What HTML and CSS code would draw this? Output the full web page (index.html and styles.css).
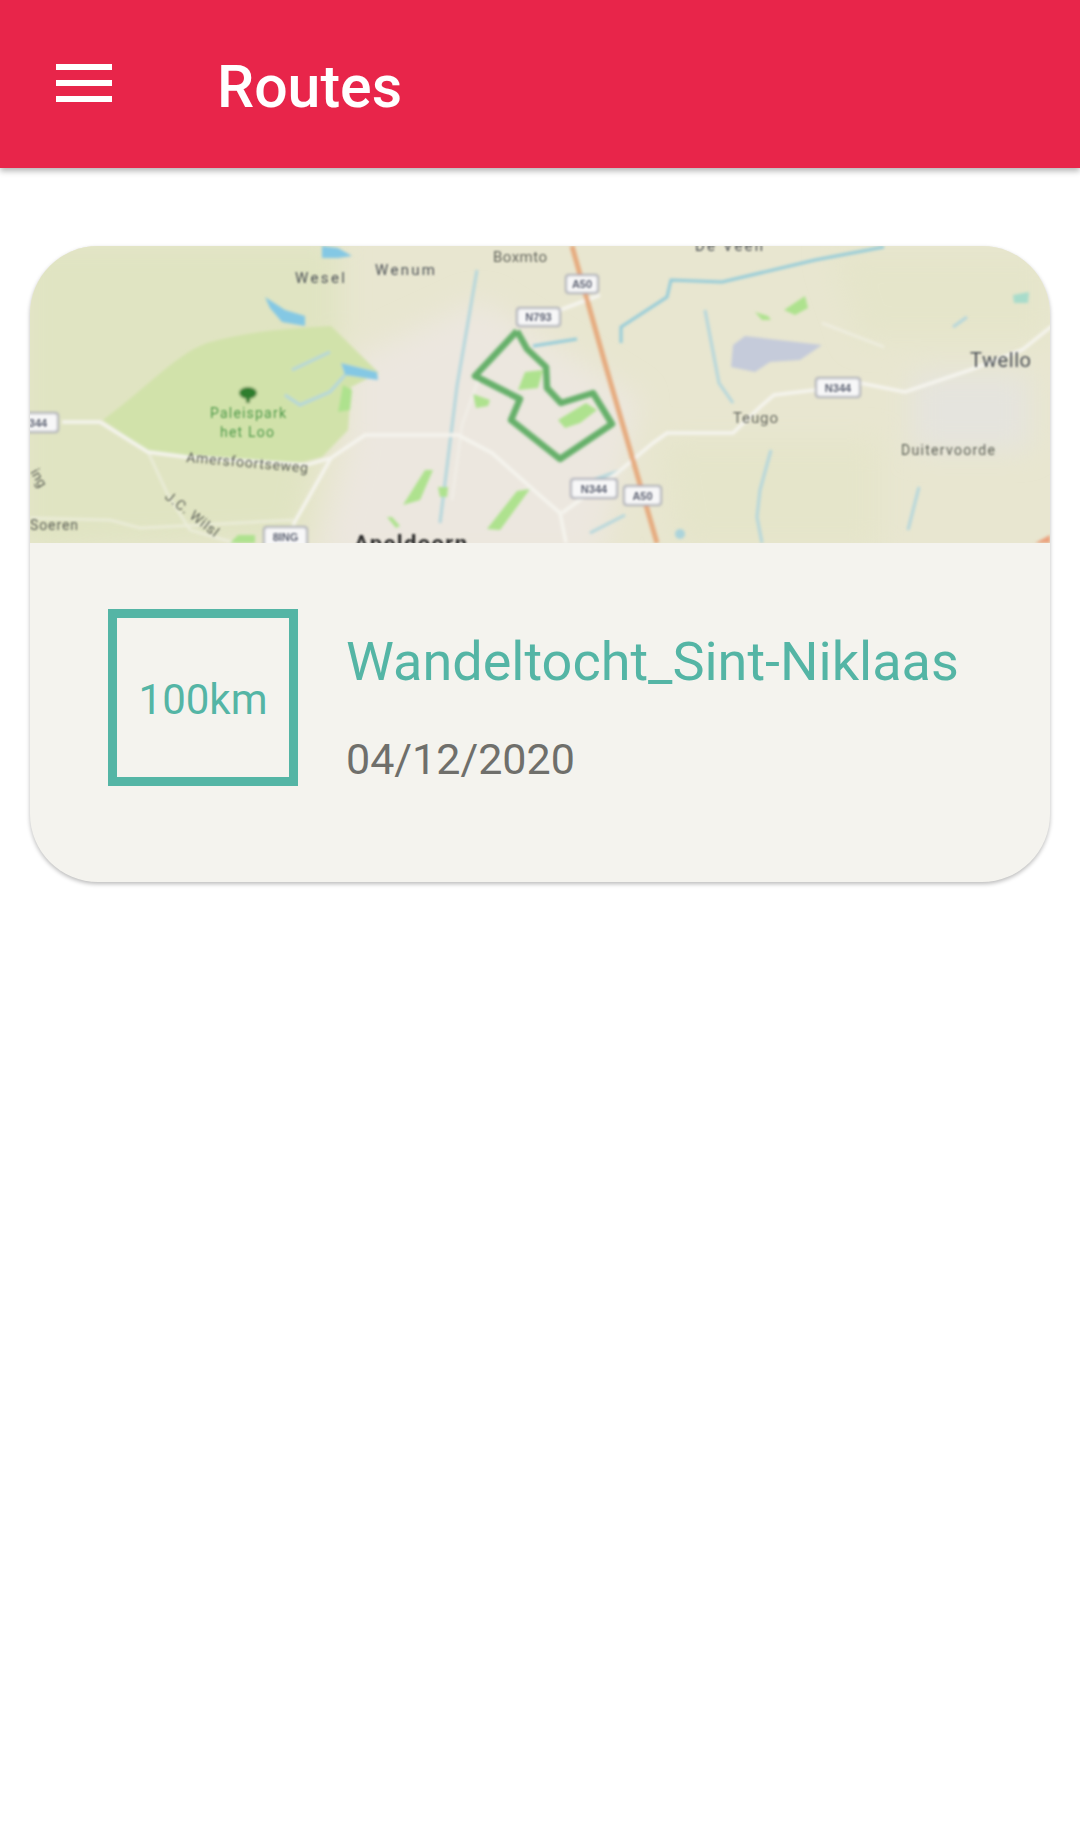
FILE: index.html
```html
<!DOCTYPE html>
<html lang="nl">
<head>
<meta charset="utf-8">
<title>Routes</title>
<link rel="stylesheet" href="styles.css">
</head>
<body>
<header class="appbar">
  <button class="menu" aria-label="Menu"><span></span><span></span><span></span></button>
  <h1 class="appbar-title">Routes</h1>
</header>
<main class="content">
  <article class="card">
    <svg class="map" viewBox="30 246 1020 297" xmlns="http://www.w3.org/2000/svg" aria-label="Kaart">
      <defs>
        <filter id="soft" x="-5%" y="-5%" width="110%" height="110%"><feGaussianBlur stdDeviation="1.6"/></filter>
        <filter id="softer" x="-10%" y="-10%" width="120%" height="120%"><feGaussianBlur stdDeviation="14"/></filter>
        <filter id="txt" x="-10%" y="-30%" width="120%" height="160%"><feGaussianBlur stdDeviation="0.85"/></filter>
      </defs>
      <rect class="m-base" x="30" y="246" width="1020" height="297"/>
      <g filter="url(#softer)">
        <polygon class="m-rural" points="20,240 340,240 340,330 300,540 20,550"/>
        <polygon class="m-urban" points="350,360 480,300 640,400 600,560 320,560 350,440"/>
        <polygon class="m-town" points="912,373 1030,373 1030,450 912,450"/>
        <polygon class="m-field" points="660,440 880,440 880,550 680,550"/>
        <polygon class="m-field" points="830,250 1050,250 1050,340 860,340"/>
      </g>
      <g filter="url(#soft)">
        <path class="m-park" d="M103 420 C150 385 175 355 207 343 C250 330 300 328 331 326 L379 373 L351 387 L348 430 L322 457 L297 463 L180 457 L148 452 Z"/>
        <g class="m-river">
          <polyline class="r-strong" points="621,343 621,327 667,297 671,280 722,282 815,260 884,247"/>
          <polyline points="477,270 457,386 440,523"/>
          <polyline points="705,310 719,383 733,403"/>
          <polyline class="r-strong" points="533,346 577,339"/>
          <polyline points="771,450 760,490 757,517 762,543"/>
          <polyline points="292,370 330,352"/>
          <polyline points="345,375 330,392 300,405 285,395"/>
          <polyline points="593,480 622,470"/>
          <polyline points="590,533 625,515"/>
          <polyline points="919,487 908,530"/>
          <polyline points="953,327 967,317"/>
        </g>
        <polygon class="m-water" points="265,297 285,310 305,316 305,326 282,322 270,308"/>
        <polygon class="m-water" points="341,363 377,372 378,380 345,375"/>
        <polygon class="m-water" points="322,246 338,248 352,256 338,258 322,258"/>
        <circle class="m-water m-pond" cx="680" cy="534" r="5"/>
        <polygon class="m-lake" points="733,345 745,336 822,345 800,360 770,362 755,372 731,367"/>
        <g class="m-road">
          <polyline points="62,422 100,422 148,452 186,457 306,465 331,458 365,435 458,435 492,453 537,493 560,513 566,543"/>
          <polyline points="562,513 617,473 653,443 667,433 733,433 760,407 774,395 815,390"/>
          <polyline points="860,383 905,392 970,370 1022,350 1052,326"/>
          <polyline points="331,458 293,525"/>
          <polyline points="560,310 600,295"/>
        </g>
        <g class="m-road m-road-faint">
          <polyline points="516,332 480,375 462,425 452,500"/>
          <polyline points="148,452 168,495 190,530 235,543"/>
          <polyline points="30,518 110,520 140,528 293,520"/>
          <polyline points="822,323 884,347"/>
        </g>
        <polyline class="m-highway" points="572,246 604,360 657,543"/>
        <polygon class="m-green" points="543,370 538,388 518,390 525,372"/>
        <polygon class="m-green" points="558,420 586,403 597,410 580,423 565,428"/>
        <polygon class="m-green" points="473,394 490,400 488,406 476,408"/>
        <polygon class="m-green" points="487,529 517,491 530,489 500,530"/>
        <polygon class="m-green" points="403,505 425,470 433,470 420,500"/>
        <polygon class="m-green" points="387,517 392,517 400,526 396,528"/>
        <polygon class="m-green" points="438,487 448,487 447,497 440,497"/>
        <polygon class="m-green" points="343,385 352,390 350,410 338,412"/>
        <polygon class="m-green" points="230,543 238,535 255,535 255,543"/>
        <polygon class="m-green" points="784,310 805,296 808,308 795,315"/>
        <polygon class="m-green" points="755,312 768,316 771,320 762,320"/>
        <polygon class="m-teal" points="1013,295 1029,292 1028,303 1014,303"/>
        <polygon class="m-orange" points="1035,543 1050,535 1050,543"/>
        <polyline class="m-route" points="517,331 475,376 520,399 511,420 560,459 612,424 593,393 561,403 547,388 546,367 527,349 517,331"/>
        <g class="m-tree">
          <ellipse cx="248" cy="393" rx="9" ry="6"/>
          <rect x="246" y="396" width="4" height="7"/>
        </g>
        <g class="m-shield">
          <rect x="566" y="275" width="32" height="18" rx="3"/>
          <rect x="517" y="308" width="43" height="18" rx="3"/>
          <rect x="571" y="479" width="46" height="19" rx="3"/>
          <rect x="624" y="486" width="37" height="19" rx="3"/>
          <rect x="816" y="378" width="44" height="19" rx="3"/>
          <rect x="20" y="413" width="38" height="19" rx="3"/>
          <rect x="264" y="527" width="43" height="22" rx="3"/>
        </g>
      </g>
      <g filter="url(#txt)">
        <text class="t-shield" x="582" y="288">A50</text>
        <text class="t-shield" x="538.500" y="321">N793</text>
        <text class="t-shield" x="594" y="493">N344</text>
        <text class="t-shield" x="642.500" y="500">A50</text>
        <text class="t-shield" x="838" y="392">N344</text>
        <text class="t-shield" x="38" y="427">344</text>
        <text class="t-shield" x="285.500" y="541">8ING</text>
        <text class="t-label" x="295" y="283" textLength="50">Wesel</text>
        <text class="t-label" x="375" y="275" textLength="60">Wenum</text>
        <text class="t-label t-light" x="493" y="262" textLength="54">Boxmto</text>
        <text class="t-label" x="695" y="251" textLength="68">De Veen</text>
        <text class="t-big" x="970" y="367" textLength="61">Twello</text>
        <text class="t-label t-light" x="733" y="423" textLength="45">Teugo</text>
        <text class="t-small" x="901" y="455" textLength="94">Duitervoorde</text>
        <text class="t-park" x="248" y="418" textLength="76">Paleispark</text>
        <text class="t-park" x="247" y="437" textLength="54">het Loo</text>
        <text class="t-small t-road1" x="186" y="462" textLength="122">Amersfoortseweg</text>
        <text class="t-small t-road2" x="164" y="498" textLength="64">J.C. Wilsl</text>
        <text class="t-small t-road3" x="30" y="472">ing</text>
        <text class="t-small" x="30" y="530" textLength="48">Soeren</text>
        <text class="t-city" x="354" y="551" textLength="114">Apeldoorn</text>
      </g>
    </svg>
    <div class="card-body">
      <div class="distance">100km</div>
      <div class="info">
        <h2 class="route-name">Wandeltocht_Sint-Niklaas</h2>
        <p class="route-date">04/12/2020</p>
      </div>
    </div>
  </article>
</main>
</body>
</html>
```

FILE: styles.css
```css
* { box-sizing: border-box; }
html, body { margin: 0; padding: 0; }
body {
  width: 1080px;
  height: 1848px;
  background: #fff;
  font-family: Roboto, "Liberation Sans", sans-serif;
  overflow: hidden;
}
.appbar {
  height: 168px;
  background: #e8254a;
  box-shadow: 0 3px 6px rgba(0, 0, 0, .3);
  display: flex;
  align-items: center;
  padding-left: 56px;
  gap: 105px;
}
.menu {
  width: 56px;
  height: 38px;
  margin: 0 0 2px;
  padding: 0;
  border: 0;
  background: none;
  display: flex;
  flex-direction: column;
  justify-content: space-between;
}
.menu span {
  display: block;
  height: 6px;
  background: #fff;
}
.appbar-title {
  margin: 5px 0 0;
  color: #fff;
  font-size: 59px;
  font-weight: 500;
  line-height: 1;
}
.content { padding: 78px 30px 0; }
.card {
  height: 636px;
  border-radius: 68px;
  overflow: hidden;
  background: #f4f3ee;
  box-shadow: 0 2px 4px rgba(0, 0, 0, .27);
}
.map { display: block; width: 1020px; height: 297px; }
.card-body {
  display: flex;
  align-items: flex-start;
  gap: 48px;
  padding: 66px 0 0 78px;
}
.distance {
  width: 190px;
  height: 177px;
  border: 9px solid #54b5a5;
  padding-top: 4px;
  color: #54b5a5;
  font-size: 42px;
  display: flex;
  align-items: center;
  justify-content: center;
}
.info { display: flex; flex-direction: column; }
.route-name {
  margin: 18px 0 0;
  color: #54b5a5;
  font-size: 54px;
  font-weight: 400;
  line-height: 70px;
  white-space: nowrap;
}
.route-date {
  margin: 37px 0 0;
  color: #6f6f6b;
  font-size: 43px;
  line-height: 50px;
}

/* map */
.m-base { fill: #e8e6d0; }
.m-rural { fill: #e0e4c2; }
.m-urban { fill: #ece7df; }
.m-town { fill: #e5e4de; }
.m-field { fill: #e5e5ca; }
.m-park { fill: #d1e2aa; }
.m-river { fill: none; stroke: #b3d6dc; stroke-width: 3; }
.r-strong { stroke: #93cbd9; }
.m-water { fill: #84c8e4; }
.m-pond { opacity: .6; }
.m-lake { fill: #c5cbda; }
.m-road { fill: none; stroke: #f5f4ee; stroke-width: 3.5; }
.m-road-faint { stroke-width: 2.5; opacity: .55; }
.m-highway { fill: none; stroke: #e6ab7f; stroke-width: 5; }
.m-green { fill: #aee28e; }
.m-teal { fill: #a8dccb; }
.m-orange { fill: #eba07c; }
.m-route { fill: none; stroke: #66b06a; stroke-width: 6.5; stroke-linejoin: round; }
.m-tree { fill: #2e7d2e; }
.m-shield { fill: #f7f7f8; stroke: #a9abb5; stroke-width: 2; }
.t-shield {
  font: 700 11px "Liberation Sans", sans-serif;
  fill: #5f6474;
  text-anchor: middle;
}
.t-label { font: 400 15px Roboto, sans-serif; fill: #4c5156; }
.t-light { fill: #65675e; }
.t-big { font: 400 20px Roboto, sans-serif; fill: #4c5156; }
.t-small { font: 400 14px Roboto, sans-serif; fill: #5e6258; }
.t-park { font: 400 14px Roboto, sans-serif; fill: #4f9a4a; text-anchor: middle; }
.t-city { font: 700 22px Roboto, sans-serif; fill: #2b2b2b; letter-spacing: 1px; }
.t-road1 { transform: rotate(5deg); transform-origin: 186px 462px; }
.t-road2 { transform: rotate(38deg); transform-origin: 164px 498px; }
.t-road3 { transform: rotate(60deg); transform-origin: 30px 472px; }
```
